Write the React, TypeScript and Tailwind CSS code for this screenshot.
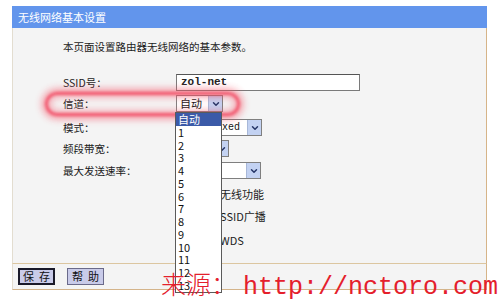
import { ChevronDown } from "lucide-react";

const cjk = "font-['Noto_Sans_CJK_SC','Noto_Sans',sans-serif]";
const mono = "font-['Liberation_Mono','Noto_Sans_CJK_SC',monospace]";

const Arrow = () => (
  <div className="flex h-full w-[14px] items-center justify-center border-l border-[#a8b8d8] bg-[#c3d2f2]">
    <ChevronDown size={10} strokeWidth={3.5} color="#243466" />
  </div>
);

const Select = ({ width, text, cn = false }: { width: number; text: string; cn?: boolean }) => (
  <div
    className="flex h-[17px] items-stretch border border-[#7f7f7f] bg-white"
    style={{ width }}
  >
    <div
      className={`flex-1 overflow-hidden whitespace-nowrap pl-[3px] leading-[15px] text-[#111] ${
        cn ? `text-[11px] ${cjk}` : `text-[10px] ${mono}`
      }`}
    >
      {text}
    </div>
    <Arrow />
  </div>
);

const Row = ({ label, mt, children }: { label: string; mt: string; children: React.ReactNode }) => (
  <div className={`flex h-[17px] items-center ${mt}`}>
    <div className={`w-[113px] text-[10.5px] text-[#1b1b1b] ${cjk}`}>{label}</div>
    {children}
  </div>
);

const Check = ({ label, mt }: { label: string; mt: string }) => (
  <div className={`flex h-[17px] items-center pl-[113px] ${mt}`}>
    <div className="ml-[2px] h-[12px] w-[12px] border border-[#555] bg-white" />
    <span className={`ml-[8px] text-[11px] text-[#1b1b1b] ${cjk}`}>{label}</span>
  </div>
);

export default function App() {
  const items = ["自动", "1", "2", "3", "4", "5", "6", "7", "8", "9", "10", "11", "12", "13"];
  return (
    <div className="relative h-[300px] w-[500px] overflow-hidden bg-white">
      <div className="ml-[12px] mt-[6px] w-[475px]">
        <div className={`flex h-[22px] items-center bg-[#6295ec] pl-[6px] text-[11px] text-white ${cjk}`}>
          无线网络基本设置
        </div>
        <div className="h-[235px] border-l border-r border-l-[#e3ddd0] border-r-[#d6b488] bg-[#f4f4f4] pl-[50px] pt-[12px]">
          <div className={`h-[14px] text-[10.5px] leading-[14px] text-[#1b1b1b] ${cjk}`}>
            本页面设置路由器无线网络的基本参数。
          </div>
          <Row label="SSID号：" mt="mt-[20px]">
            <div className={`flex h-[17px] w-[184px] items-center border border-[#7a7a7a] border-t-[#555] bg-white pl-[4px] text-[11px] font-bold text-[#222] ${mono}`}>
              zol-net
            </div>
          </Row>
          <Row label="信道：" mt="mt-[4px]">
            <Select width={47} text="自动" cn />
          </Row>
          <Row label="模式：" mt="mt-[7px]">
            <Select width={86} text="11bg mixed" />
          </Row>
          <Row label="频段带宽：" mt="mt-[4px]">
            <Select width={53} text="自动" cn />
          </Row>
          <Row label="最大发送速率：" mt="mt-[5px]">
            <Select width={85} text="300Mbps" />
          </Row>
          <Check label="开启无线功能" mt="mt-[7px]" />
          <Check label="开启SSID广播" mt="mt-[5px]" />
          <Check label="开启WDS" mt="mt-[7px]" />
        </div>
        <div className="flex h-[27px] items-center gap-[12px] border border-t-[#dcc6a0] border-b-[#d4b48a] border-l-[#e3ddd0] border-r-[#d6b488] bg-[#f4f4f4] pl-[5px]">
          <button className={`flex h-[17px] w-[37px] items-center justify-center gap-[5px] border-2 border-[#1a1a2a] bg-[#c9cbe9] text-[11px] text-[#111] ${cjk}`}>
            <span>保</span>
            <span>存</span>
          </button>
          <button className={`flex h-[17px] w-[37px] items-center justify-center gap-[5px] border border-[#6a6a8a] bg-[#c9cbe9] text-[11px] text-[#111] ${cjk}`}>
            <span>帮</span>
            <span>助</span>
          </button>
        </div>
      </div>

      {/* red highlight around 信道 */}
      <div className="pointer-events-none absolute left-[45px] top-[92px] h-[24px] w-[195px] rounded-full border-[3px] border-[#f2405a] opacity-90 blur-[1.5px] shadow-[0_0_7px_3px_rgba(245,70,90,0.6),inset_0_0_6px_3px_rgba(245,90,110,0.5)]" />

      {/* open channel list */}
      <div className="absolute left-[175px] top-[112px] w-[47px] border border-[#5a5a5a] bg-white">
        {items.map((it, i) => (
          <div
            key={it}
            className={`flex h-[12.75px] items-center pl-[2px] text-[11px] ${cjk} ${i === 0 ? "bg-[#3b5aa8] text-white" : "text-[#111]"}`}
          >
            {it}
          </div>
        ))}
      </div>

      {/* watermark */}
      <div className="pointer-events-none absolute left-[161px] top-[268px] flex items-baseline whitespace-nowrap text-[#e4202c]">
        <span className={`text-[25px] font-light leading-[30px] ${cjk}`}>来源：</span>
        <span className={`ml-[7px] text-[25px] leading-[30px] ${mono}`}>http://nctoro.com</span>
      </div>
    </div>
  );
}
